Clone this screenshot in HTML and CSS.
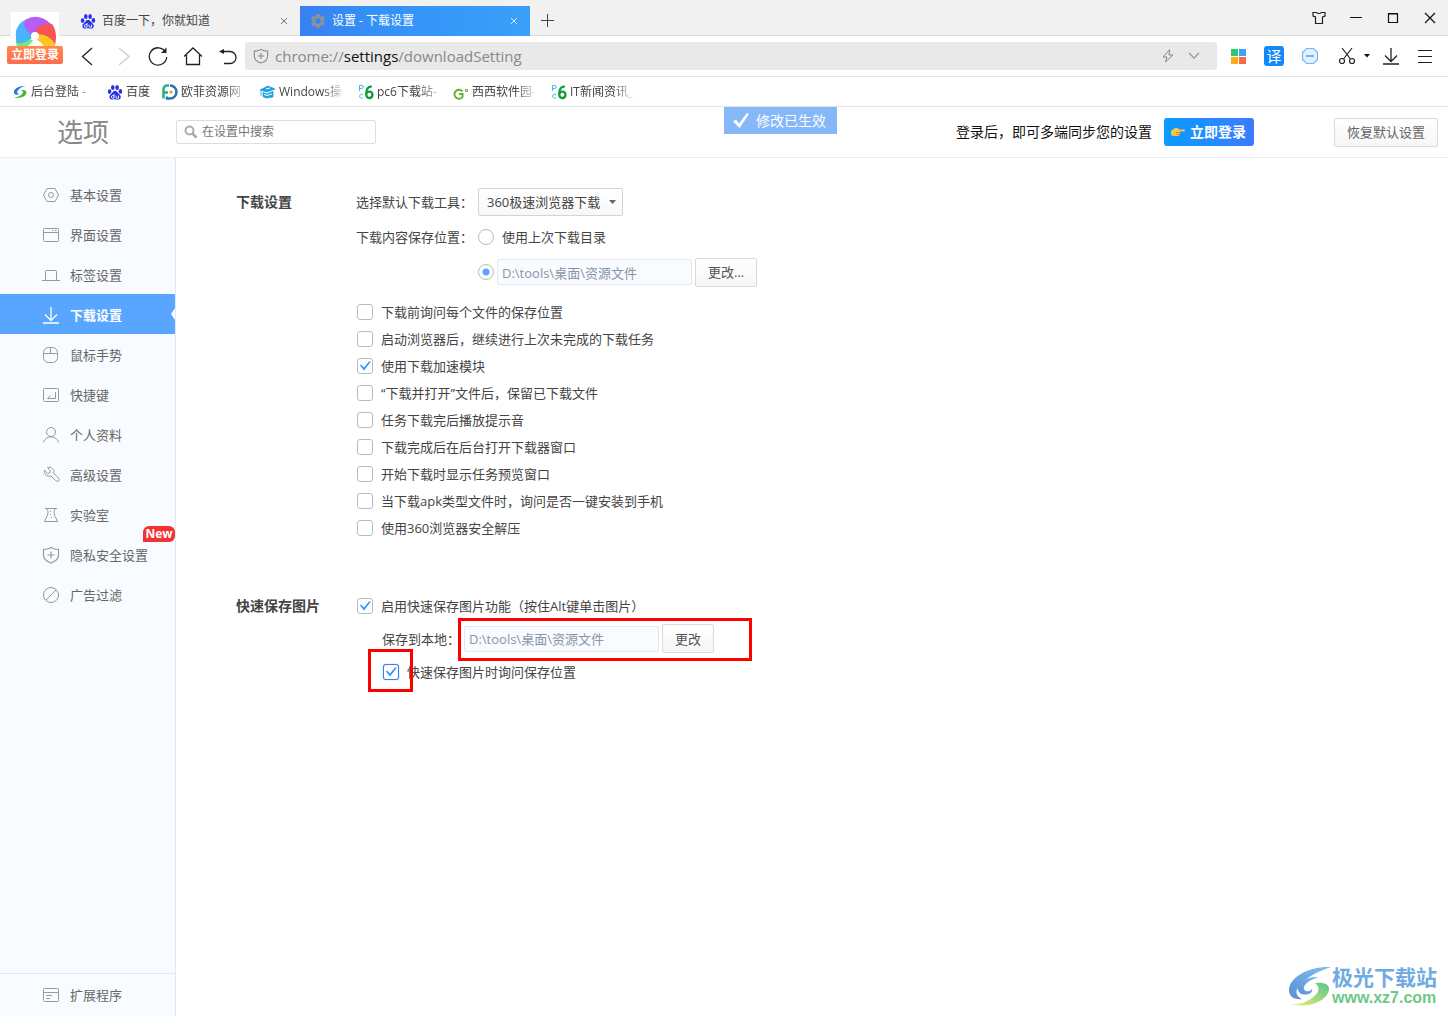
FILE: index.html
```html
<!DOCTYPE html>
<html lang="zh-CN">
<head>
<meta charset="utf-8">
<meta name="viewport" content="width=device-width, initial-scale=1">
<title>设置 - 下载设置</title>
<link rel="stylesheet" href="styles.css">
</head>
<body>
<svg class="defs" aria-hidden="true">
  <symbol id="paw" viewBox="0 0 16 16">
    <g fill="#2932e1"><ellipse cx="2.6" cy="7.6" rx="1.8" ry="2.3"/><ellipse cx="5.8" cy="3.4" rx="1.8" ry="2.5"/><ellipse cx="10.1" cy="3.4" rx="1.8" ry="2.5"/><ellipse cx="13.4" cy="7.4" rx="1.8" ry="2.3"/><path d="M8 6.800c-1.500 0-2.200 1.100-3 2.200-1 1.200-2.800 2.200-2.600 4.200.2 1.800 1.500 2.400 3 2.300 1-.1 1.700-.3 2.600-.3s1.800.3 2.800.4c1.500.1 2.800-.6 3-2.300.1-2-1.600-3-2.700-4.200C10.200 8 9.500 6.800 8 6.800z"/></g>
    <path d="M7 10v4.200H5.600a1.300 1.300 0 0 1 0-2.600H7M9 11.600v1.700q0 .9.900.9h1.600v-2.600" fill="none" stroke="#fff" stroke-width=".9"/>
  </symbol>
  <symbol id="pc6" viewBox="0 0 16 16">
    <path d="M1.500 7V1.500h2.200a1.500 1.500 0 0 1 0 3H1.500M5 10.800a2 2 0 1 0 0 2.900" fill="none" stroke="#45b6e6" stroke-width="1"/>
    <path d="M13.800 2.600C10 2.200 8.200 5.500 8.200 9.500c0 3 1.200 4.500 3.200 4.500s3-1.300 3-3.300-1-3.100-2.800-3.100c-1.500 0-2.800.8-3.200 2" fill="none" stroke="#0b9d3c" stroke-width="2.300"/>
  </symbol>
  <symbol id="down" viewBox="0 0 18 18"><path d="M9 1v13M3 8.500l6 6 6-6M1 17h16" fill="none" stroke="currentColor" stroke-width="1.300"/></symbol>
  <symbol id="shield" viewBox="0 0 18 18"><path d="M9 1.500Q12 3.500 16.500 3.500V9q0 5.500-7.500 8Q1.500 14.500 1.500 9V3.500Q6 3.500 9 1.500zM9 5.500v7M5.500 9h7" fill="none" stroke="currentColor" stroke-width="1.200"/></symbol>
</svg>

<header class="chrome">
  <button class="account" aria-label="立即登录">
    <span class="account-logo">
      <svg width="42" height="42" viewBox="-21 -21 42 42">
        <path d="M-2 3Q-10 3-19 0-20 10-14 16-4 14-2 3z" fill="#73e783"/>
        <path d="M-3 1Q-10 7-18 6-23-12-8-18L2-14z" fill="#49b4fb"/>
        <path d="M-2-1Q-13-8-10-17 3-25 16-13L8-4z" fill="#b95df2"/>
        <path d="M-1-3Q4-15 17-13 23-5 20 8L8 4z" fill="#fb5354"/>
        <path d="M2-3Q14-3 20 7 17 15 12 18 10 7 2 3z" fill="#ffc523"/>
        <circle cx="0" cy="-1" r="4" fill="#fff"/><path d="M0 2l7 7H-7z" fill="#fff"/>
      </svg>
    </span>
    <span class="account-label">立即登录</span>
  </button>

  <div class="titlebar">
    <div class="tabs">
      <div class="tab">
        <svg class="tab-icon" width="16" height="16"><use href="#paw"/></svg>
        <span class="tab-title">百度一下，你就知道</span>
        <button class="tab-close" aria-label="关闭"><svg width="8" height="8"><path d="M1 1l6 6M7 1L1 7" stroke="currentColor" fill="none"/></svg></button>
      </div>
      <div class="tab tab-active">
        <svg class="tab-icon" width="16" height="16" viewBox="0 0 16 16"><path fill-rule="evenodd" fill="#8b9299" d="M6.300 1h3.400l.4 2 1.200.7 2-.7 1.700 2.900-1.500 1.400v1.400l1.500 1.400-1.700 2.900-2-.7-1.200.7-.4 2H6.300l-.4-2-1.200-.7-2 .7L1 10.100l1.500-1.400V7.300L1 5.900 2.700 3l2 .7L5.900 3zM8 5.300a2.700 2.700 0 1 0 0 5.400 2.700 2.700 0 0 0 0-5.400z"/></svg>
        <span class="tab-title">设置 - 下载设置</span>
        <button class="tab-close" aria-label="关闭"><svg width="8" height="8"><path d="M1 1l6 6M7 1L1 7" stroke="currentColor" fill="none"/></svg></button>
      </div>
      <button class="icon-button new-tab" aria-label="新标签页"><svg width="14" height="14"><path d="M7.500 1v13M1 7.500h13" stroke="#444" fill="none"/></svg></button>
    </div>
    <div class="window-buttons">
      <button class="icon-button" aria-label="皮肤"><svg width="14" height="14" viewBox="0 0 14 14"><path d="M4.500 1.500H1v3.500l2.500 1v6.500h7V6L13 5V1.500H9.500Q7 3.500 4.500 1.500z" fill="none" stroke="#222" stroke-width="1.200"/></svg></button>
      <button class="icon-button" aria-label="最小化"><svg width="12" height="12"><path d="M0 5.500h12" stroke="#111"/></svg></button>
      <button class="icon-button" aria-label="最大化"><svg width="12" height="12"><path d="M1.500 1.500h9v9h-9zM1 2h10" fill="none" stroke="#111" stroke-width="1.200"/></svg></button>
      <button class="icon-button" aria-label="关闭窗口"><svg width="12" height="12"><path d="M1 1l10 10M11 1L1 11" stroke="#111" stroke-width="1.200"/></svg></button>
    </div>
  </div>

  <div class="toolbar">
    <div class="nav-buttons">
      <button class="icon-button" aria-label="后退"><svg width="20" height="20"><path d="M14 2L4.500 10.500 14 19" fill="none" stroke="#222" stroke-width="1.300"/></svg></button>
      <button class="icon-button" aria-label="前进"><svg width="20" height="20"><path d="M6 2l10 8.500L6 19" fill="none" stroke="#ccc" stroke-width="1.300"/></svg></button>
      <button class="icon-button" aria-label="刷新"><svg width="20" height="20"><path d="M17.500 6A8.700 8.700 0 1 0 18.700 11" fill="none" stroke="#222" stroke-width="1.300"/><path d="M18.500 1.500v5.500h-5.500z" fill="#222"/></svg></button>
      <button class="icon-button" aria-label="主页"><svg width="20" height="20"><path d="M1 10.500l9-8.500 9 8.500M3.500 9v9.500h13V9" fill="none" stroke="#222" stroke-width="1.300"/></svg></button>
      <button class="icon-button" aria-label="恢复"><svg width="20" height="20"><path d="M3 5.500h9a6 6 0 0 1 0 12H6" fill="none" stroke="#222" stroke-width="1.300"/><path d="M1 5.500l5-2.500v5z" fill="#222"/></svg></button>
    </div>
    <div class="address">
      <svg class="address-icon" width="16" height="16"><use href="#shield"/></svg>
      <span class="url">chrome://<span class="url-host">settings</span>/downloadSetting</span>
      <svg width="12" height="14" viewBox="0 0 12 14"><path d="M7.500.8L1 8h4L3.500 13 11 6H7z" fill="none" stroke="#888"/></svg>
      <svg width="12" height="8"><path d="M1 1l5 5 5-5" fill="none" stroke="#999" stroke-width="1.300"/></svg>
    </div>
    <div class="tools">
      <button class="icon-button" aria-label="应用"><svg width="15" height="15"><path d="M0 0h7v7H0z" fill="#28cb70"/><path d="M8 0h7v7H8z" fill="#3ba2fa"/><path d="M0 8h7v7H0z" fill="#ffac14"/><path d="M8 8h7v7H8z" fill="#fe6742"/></svg></button>
      <button class="icon-button" aria-label="翻译"><span class="translate-mark">译</span></button>
      <button class="icon-button" aria-label="广告拦截"><svg width="18" height="18"><path d="M5.500 1.500h7l4 4v7l-4 4h-7l-4-4v-7z" fill="#e3f1fe" stroke="#72b5fa" stroke-width="1.200"/><path d="M5 9h8" stroke="#4aa0f8" stroke-width="1.500"/></svg></button>
      <button class="icon-button scissors" aria-label="截图"><svg width="18" height="18"><path d="M4 1l8.500 11M14 1L5.500 12" fill="none" stroke="#222" stroke-width="1.200"/><circle cx="4" cy="14" r="2.500" fill="none" stroke="#222" stroke-width="1.200"/><circle cx="14" cy="14" r="2.500" fill="none" stroke="#222" stroke-width="1.200"/></svg><svg width="6" height="4"><path d="M0 0h6L3 3.500z" fill="#111"/></svg></button>
      <button class="icon-button tool-narrow" aria-label="下载"><svg width="18" height="18"><use href="#down"/></svg></button>
      <button class="icon-button tool-narrow" aria-label="菜单"><svg width="14" height="14"><path d="M0 1.500h14M0 7.500h14M0 13.500h14" stroke="#222"/></svg></button>
    </div>
  </div>

  <nav class="bookmarks" aria-label="书签">
    <a class="bookmark bookmark-mid" href="#"><svg width="16" height="16" viewBox="0 0 16 16"><path d="M13.500 2C7 1.500 1 5 2 9q1 3 6 1Q4 10 5.500 7 8 3 13.500 2z" fill="#2080d0"/><path d="M2 13.500c6 1.500 12-1 12.500-5Q14 5 8.500 6.500 12 7 10.500 9.500 8 13 2 13.500z" fill="#46b43c"/></svg><span class="bookmark-title">后台登陆 -</span></a>
    <a class="bookmark" href="#"><svg width="16" height="16"><use href="#paw"/></svg><span>百度</span></a>
    <a class="bookmark bookmark-wide" href="#"><svg width="16" height="16" viewBox="0 0 16 16"><path d="M7 1.500H5Q1.500 2 1.500 6v8.500M2 8.500h4" fill="none" stroke="#21b183" stroke-width="2.500"/><path d="M8 1.500a6.500 6.500 0 0 1 0 13H5v-2" fill="none" stroke="#2377ae" stroke-width="2.500"/><circle cx="9" cy="8" r="1.600" fill="#f58b2c"/></svg><span class="bookmark-title">欧菲资源网</span></a>
    <a class="bookmark bookmark-wide" href="#"><svg width="16" height="16" viewBox="0 0 16 16"><path d="M0 6l8-4 7 3-8 3zM3 8.500l4 1.500 6-2.500V13l-7 1-3-1.500zM1 7v5" fill="#1da2dd" stroke="#1da2dd" stroke-width=".8"/><path d="M4 10.500l3 1 5-1.500M6 5l4-1" stroke="#fff" fill="none"/></svg><span class="bookmark-title">Windows操</span></a>
    <a class="bookmark bookmark-mid" href="#"><svg width="16" height="16"><use href="#pc6"/></svg><span class="bookmark-title">pc6下载站-</span></a>
    <a class="bookmark bookmark-wide" href="#"><svg width="16" height="16" viewBox="0 0 16 16"><path d="M9.500 7.500A4.500 4.500 0 1 0 9.500 13V10H6" fill="none" stroke="#65b22e" stroke-width="2"/><path d="M12.500 5.500h2v2h-2z" fill="none" stroke="#65b22e"/></svg><span class="bookmark-title">西西软件园-</span></a>
    <a class="bookmark bookmark-wide" href="#"><svg width="16" height="16"><use href="#pc6"/></svg><span class="bookmark-title">IT新闻资讯_</span></a>
  </nav>
</header>

<div class="page-head">
  <h1 class="page-title">选项</h1>
  <div class="search">
    <svg width="14" height="14"><circle cx="5.500" cy="5.500" r="4" fill="none" stroke="#aaa" stroke-width="2"/><path d="M8.500 8.500l4 4" stroke="#aaa" stroke-width="2.500"/></svg>
    <input class="search-input" type="text" placeholder="在设置中搜索" aria-label="在设置中搜索">
  </div>
  <div class="toast" role="status"><svg width="18" height="18"><path d="M1 9.500l3-2 3 4L15 1l2 1L7.500 16z" fill="#fff"/></svg><span>修改已生效</span></div>
  <p class="login-hint">登录后，即可多端同步您的设置</p>
  <button class="login-button"><svg width="14" height="12" viewBox="0 0 14 12"><path d="M0 5l4-3h3l1 1.500h5.500q1 1 0 2H8.500l.5 1.500-.5 2-1 1H3L0 9z" fill="#fcc444"/><path d="M5 6.500h3.500M5.500 8.500h3" stroke="#d28d1e" fill="none"/></svg><span>立即登录</span></button>
  <button class="button reset-button">恢复默认设置</button>
</div>

<div class="layout">
  <nav class="sidebar" aria-label="设置分类">
    <div class="menu">
      <a class="menu-item" href="#"><svg width="18" height="18"><path d="M5 2.500h8L16.500 9 13 15.500H5L1.500 9z" fill="none" stroke="currentColor"/><circle cx="9" cy="9" r="2.500" fill="none" stroke="currentColor"/></svg>基本设置</a>
      <a class="menu-item" href="#"><svg width="18" height="18"><rect x="1.500" y="2.500" width="15" height="13" rx="1" fill="none" stroke="currentColor"/><path d="M2 6.500h14M10 4.500h1.500M13 4.500h1.500" stroke="currentColor"/></svg>界面设置</a>
      <a class="menu-item" href="#"><svg width="18" height="18"><path d="M0 14.500h18M3.500 14V5.500q0-1 1-1h9q1 0 1 1V14" fill="none" stroke="currentColor"/></svg>标签设置</a>
      <a class="menu-item menu-item-active" href="#" aria-current="page"><svg width="18" height="18"><use href="#down"/></svg>下载设置</a>
      <a class="menu-item" href="#"><svg width="18" height="18"><rect x="1.500" y="1.500" width="14" height="15" rx="5" fill="none" stroke="currentColor"/><path d="M2 7.500h13M8.500 2v5.500" stroke="currentColor"/></svg>鼠标手势</a>
      <a class="menu-item" href="#"><svg width="18" height="18"><rect x="1.500" y="2.500" width="15" height="13" rx="1" fill="none" stroke="currentColor"/><path d="M13.500 6v6.500H6M8.500 9.500L5.500 12.500h3" fill="none" stroke="currentColor"/></svg>快捷键</a>
      <a class="menu-item" href="#"><svg width="18" height="18"><circle cx="9" cy="6" r="4.500" fill="none" stroke="currentColor"/><path d="M1.500 16.500C3 9 15 9 16.500 16.500" fill="none" stroke="currentColor"/></svg>个人资料</a>
      <a class="menu-item" href="#"><svg width="18" height="18"><path d="M5.500 1.500C9.500.5 13 3.500 11.500 7l5 5q1.500 2 0 3-1.500 1-3-.5L9 10C5 11 1.500 8 2.500 4l3 3.500Q8 7.500 8.500 5z" fill="none" stroke="currentColor" stroke-linejoin="round"/></svg>高级设置</a>
      <a class="menu-item" href="#"><svg width="18" height="18"><path d="M3 2.500h12M5 3q1 1 1 3.500 0 3-2 5.500l-1.500 3.500h13L14 12q-2-2.500-2-5.500Q12 4 13 3" fill="none" stroke="currentColor"/><path d="M8 5.500h1M8 8.500h1M9 11.500h1" stroke="currentColor"/></svg>实验室</a>
      <a class="menu-item" href="#"><svg width="18" height="18"><use href="#shield"/></svg>隐私安全设置<span class="badge-new">New</span></a>
      <a class="menu-item" href="#"><svg width="18" height="18"><circle cx="9" cy="9" r="7.500" fill="none" stroke="currentColor"/><path d="M4 14L14 4" stroke="currentColor"/></svg>广告过滤</a>
    </div>
    <div class="menu-foot">
      <a class="menu-item" href="#"><svg width="18" height="18"><rect x="1.500" y="2.500" width="15" height="13" rx="1" fill="none" stroke="currentColor"/><path d="M2 6.500h14M4 9.500h6M4 12.500h4" stroke="currentColor"/></svg>扩展程序</a>
    </div>
  </nav>

  <main class="content">
    <section class="section">
      <h2 class="section-title">下载设置</h2>
      <div class="section-body">
        <div class="row">
          <label class="row-label" for="tool">选择默认下载工具：</label>
          <span class="select">
            <select id="tool"><option>360极速浏览器下载</option></select>
            <svg class="select-arrow" width="7" height="4"><path d="M0 0h7L3.500 4z" fill="#666"/></svg>
          </span>
        </div>
        <div class="row">
          <span class="row-label">下载内容保存位置：</span>
          <label class="option"><input class="radio" type="radio" name="dir">使用上次下载目录</label>
        </div>
        <div class="row row-indent">
          <input class="radio" type="radio" name="dir" aria-label="指定目录" checked>
          <input class="path" type="text" value="D:\tools\桌面\资源文件" aria-label="下载目录" disabled>
          <button class="button">更改...</button>
        </div>
        <div class="checks">
          <label class="option"><input class="check" type="checkbox">下载前询问每个文件的保存位置</label>
          <label class="option"><input class="check" type="checkbox">启动浏览器后，继续进行上次未完成的下载任务</label>
          <label class="option"><input class="check" type="checkbox" checked>使用下载加速模块</label>
          <label class="option"><input class="check" type="checkbox">“下载并打开”文件后，保留已下载文件</label>
          <label class="option"><input class="check" type="checkbox">任务下载完后播放提示音</label>
          <label class="option"><input class="check" type="checkbox">下载完成后在后台打开下载器窗口</label>
          <label class="option"><input class="check" type="checkbox">开始下载时显示任务预览窗口</label>
          <label class="option"><input class="check" type="checkbox">当下载apk类型文件时，询问是否一键安装到手机</label>
          <label class="option"><input class="check" type="checkbox">使用360浏览器安全解压</label>
        </div>
      </div>
    </section>

    <section class="section section-images">
      <h2 class="section-title">快速保存图片</h2>
      <div class="section-body">
        <label class="option"><input class="check" type="checkbox" checked>启用快速保存图片功能（按住Alt键单击图片）</label>
        <div class="sub-row">
          <label class="sub-label" for="local">保存到本地：</label>
          <span class="marked">
            <input class="path" id="local" type="text" value="D:\tools\桌面\资源文件" disabled>
            <button class="button">更改</button>
            <span class="mark mark-path"></span>
          </span>
        </div>
        <div class="sub-row">
          <label class="option marked"><input class="check check-focus" type="checkbox" checked>快速保存图片时询问保存位置<span class="mark mark-check"></span></label>
        </div>
      </div>
    </section>

    <div class="watermark">
      <svg width="44" height="42" viewBox="0 0 44 42">
        <defs>
          <linearGradient id="wb" x1="0" y1="1" x2="1" y2="0"><stop offset="0" stop-color="#5b8ed2"/><stop offset="1" stop-color="#7cc4f2"/></linearGradient>
          <linearGradient id="wg" x1="0" y1="1" x2="1" y2="0"><stop offset="0" stop-color="#eaee72"/><stop offset="1" stop-color="#5cc48c"/></linearGradient>
        </defs>
        <path d="M43 1C22 0 1 11 1 24c0 7 6 10 13 9-7-3-7-9-2-14C18 12 28 6 43 1z" fill="url(#wb)"/>
        <path d="M31 11C18 10 8 17 10 24q2 6 11 4 4-2 3-5-2 3-6 2-4-2-1-6 4-5 14-8z" fill="url(#wb)"/>
        <path d="M2 38c11 1 16-2 22-6 7-5 9-10 3-15 9-1 14 1 14 6-1 11-18 20-39 15z" fill="url(#wg)"/>
      </svg>
      <div class="watermark-text"><span class="watermark-name">极光下载站</span><span class="watermark-url">www.xz7.com</span></div>
    </div>
  </main>
</div>
</body>
</html>
```
FILE: styles.css
```css
* { box-sizing: border-box; }

body {
  margin: 0;
  min-height: 100vh;
  display: flex;
  flex-direction: column;
  background: #fff;
  color: #444;
  font: 13px/20px "Open Sans", "Noto Sans CJK SC", sans-serif;
}

button, input, select { font: inherit; color: inherit; margin: 0; }
h1, h2, p { margin: 0; }
a { color: inherit; text-decoration: none; }
svg { flex: none; display: block; }
.defs { position: absolute; width: 0; height: 0; }

.icon-button {
  display: flex;
  align-items: center;
  justify-content: center;
  padding: 0;
  border: 0;
  background: none;
}

/* Browser frame */
.chrome { position: relative; }

.titlebar {
  display: flex;
  justify-content: space-between;
  height: 36px;
  padding-left: 70px;
  background: #f1f1f1;
  border-bottom: 1px solid #dcdcdc;
}
.tabs { display: flex; padding-top: 6px; }
.tab {
  display: flex;
  align-items: center;
  width: 230px;
  height: 30px;
  padding: 0 12px 0 10px;
  font-size: 12px;
}
.tab-active { color: #fff; background: linear-gradient(90deg, #3a7ff2, #3390f7 30%, #39a0fa); }
.tab-title { flex: 1; margin-left: 6px; line-height: 22px; }
.tab-close { display: flex; padding: 0; border: 0; background: none; color: #777; }
.tab-active .tab-close { color: #d8eaff; }
.new-tab { width: 34px; height: 28px; }
.window-buttons { display: flex; }
.window-buttons .icon-button { width: 37px; }

.toolbar {
  display: flex;
  align-items: center;
  height: 41px;
  padding-left: 70px;
  border-bottom: 1px solid #e2e4e8;
}
.nav-buttons { display: flex; }
.nav-buttons .icon-button { width: 35px; height: 28px; }
.address {
  flex: 1;
  display: flex;
  align-items: center;
  gap: 14px;
  height: 28px;
  padding: 0 17px 0 8px;
  border-radius: 2px;
  background: #e9e9e9;
  color: #888;
}
.address-icon { margin-right: -8px; }
.url { flex: 1; font-size: 15px; }
.url-host { color: #111; }
.tools { display: flex; padding: 0 6px 0 3px; color: #222; }
.tools .icon-button { width: 36px; height: 28px; }
.tools .scissors { width: 46px; gap: 8px; padding-left: 6px; }
.tools .tool-narrow { width: 34px; }
.translate-mark {
  width: 20px;
  height: 20px;
  border-radius: 3px;
  background: #1488f8;
  color: #fff;
  font-size: 15px;
  line-height: 20px;
}

.bookmarks {
  display: flex;
  height: 30px;
  padding-left: 12px;
  border-bottom: 1px solid #e2e4e8;
  font-size: 12px;
}
.bookmark { display: flex; align-items: center; gap: 3px; margin-right: 12px; }
.bookmark-mid { width: 83px; }
.bookmark-wide { width: 86px; }
.bookmark-title {
  flex: 1;
  overflow: hidden;
  white-space: nowrap;
  mask-image: linear-gradient(90deg, #000 44px, transparent 66px);
}

.account {
  position: absolute;
  top: 12px;
  left: 7px;
  display: flex;
  flex-direction: column;
  align-items: center;
  width: 56px;
  padding: 0;
  border: 0;
  background: none;
}
.account-logo {
  display: flex;
  justify-content: center;
  width: 48px;
  height: 34px;
  padding-top: 4px;
  overflow: hidden;
  background: #fff;
}
.account-label {
  width: 56px;
  height: 18px;
  border-radius: 2px;
  background: linear-gradient(#ff8a4c, #ff6c4e);
  color: #fff;
  font-size: 12px;
  font-weight: 700;
  line-height: 18px;
}

/* Page header */
.page-head {
  position: relative;
  display: flex;
  align-items: center;
  height: 51px;
  padding-right: 10px;
  border-bottom: 1px solid #ebedf0;
}
.page-title {
  width: 176px;
  padding-left: 57px;
  color: #888;
  font-size: 26px;
  font-weight: 400;
  line-height: 36px;
}
.search {
  display: flex;
  align-items: center;
  gap: 4px;
  width: 200px;
  height: 24px;
  padding-left: 7px;
  border: 1px solid #ddd;
  border-radius: 2px;
}
.search-input { flex: 1; min-width: 0; padding: 0; border: 0; outline: 0; background: none; font-size: 12px; }
.search-input::placeholder { color: #757575; }
.toast {
  position: absolute;
  top: 0;
  left: 50%;
  display: flex;
  align-items: center;
  gap: 6px;
  height: 27px;
  padding: 0 11px 0 8px;
  background: #86b8f9;
  color: #fff;
  font-size: 14px;
}
.login-hint { margin-left: auto; color: #111; font-size: 14px; }
.login-button {
  display: flex;
  align-items: center;
  gap: 5px;
  height: 28px;
  margin: 0 80px 0 12px;
  padding: 0 8px 0 7px;
  border: 0;
  border-radius: 3px;
  background: linear-gradient(90deg, #0a9cff, #3b7bff);
  color: #fff;
  font-size: 14px;
  font-weight: 700;
}
.button {
  height: 29px;
  padding: 0 12px;
  border: 1px solid #d9d9d9;
  border-radius: 2px;
  background: linear-gradient(#fff, #f6f6f6);
  color: #555;
}
.reset-button { color: #666; }

/* Sidebar */
.layout { flex: 1; display: flex; }
.sidebar {
  display: flex;
  flex-direction: column;
  justify-content: space-between;
  width: 176px;
  border-right: 1px solid #e4e8ee;
  background: #f8fbff;
}
.menu { padding-top: 16px; }
.menu-foot { padding-bottom: 2px; border-top: 1px solid #e4e8ee; }
.menu-item {
  position: relative;
  display: flex;
  align-items: center;
  gap: 10px;
  height: 40px;
  padding: 2px 0 0 42px;
  color: #666;
}
.menu-item svg { color: #999; }
.menu-item-active { background: #58a6ff; color: #fff; font-weight: 700; }
.menu-item-active svg { color: #fff; }
.menu-item-active::after {
  content: "";
  position: absolute;
  top: 14px;
  right: 0;
  border: 6px solid transparent;
  border-left-width: 0;
  border-right: 4px solid #fff;
}
.badge-new {
  position: absolute;
  top: -8px;
  right: 0;
  width: 32px;
  height: 16px;
  border-radius: 6px 6px 6px 0;
  background: #f33232;
  color: #fff;
  font-size: 12px;
  font-weight: 700;
  line-height: 16px;
  text-align: center;
}

/* Settings */
.content { position: relative; flex: 1; padding: 30px 60px; }
.section { display: flex; }
.section-images { margin-top: 48px; }
.section-title { width: 120px; font-size: 14px; line-height: 28px; }
.section-images .section-title { line-height: 33px; }
.row { display: flex; align-items: center; height: 28px; margin-bottom: 7px; }
.row-label { width: 122px; }
.row-indent { padding-left: 122px; }
.select { position: relative; display: flex; }
.select select {
  width: 145px;
  height: 28px;
  padding: 0 8px;
  appearance: none;
  border: 1px solid #d4d4d4;
  border-radius: 2px;
  background: linear-gradient(#fff, #f8f8f8);
}
.select-arrow { position: absolute; top: 12px; right: 7px; pointer-events: none; }
.option { display: flex; align-items: center; gap: 8px; }
.checks { padding-top: 5px; }
.checks .option { height: 27px; }
.section-images .section-body > * { display: flex; align-items: center; height: 33px; }
.check, .radio {
  flex: none;
  width: 16px;
  height: 16px;
  appearance: none;
  border: 1px solid #bbb;
  background: #fff;
}
.check { margin-left: 1px; border-radius: 3px; }
.check:checked::before {
  content: "";
  display: block;
  width: 14px;
  height: 14px;
  background: #3494ff;
  clip-path: polygon(2px 7px, 3px 6px, 6px 9px, 11px 3px, 13px 3px, 6px 12px);
}
.check-focus { border-color: #3c7df0; box-shadow: 0 0 1px #3c7df0; }
.radio { border-radius: 50%; }
.radio:checked { background: radial-gradient(circle, #5aa6ff 3px, #fff 4px); }
.path {
  width: 195px;
  height: 26px;
  margin: 0 3px;
  padding: 0 4px;
  border: 1px solid #e2e8f2;
  border-radius: 2px;
  background: #f8fbff;
  color: #8a95a2;
}
.sub-row { padding-left: 26px; }
.sub-label { width: 79px; }

/* Red frames drawn over the controls */
.marked { position: relative; display: flex; align-items: center; }
.mark { position: absolute; border: 3px solid #f00; pointer-events: none; }
.mark-path { top: -6px; left: -3px; width: 294px; height: 43px; }
.mark-check { top: -13px; left: -14px; width: 45px; height: 43px; }

.watermark {
  position: absolute;
  right: 11px;
  bottom: 8px;
  display: flex;
  align-items: center;
}
.watermark-text { display: flex; flex-direction: column; color: #6fabe2; }
.watermark-name { font-size: 21px; font-weight: 700; line-height: 22px; }
.watermark-url { color: #6cca85; font: 700 16px/20px "Liberation Sans", sans-serif; }
```
